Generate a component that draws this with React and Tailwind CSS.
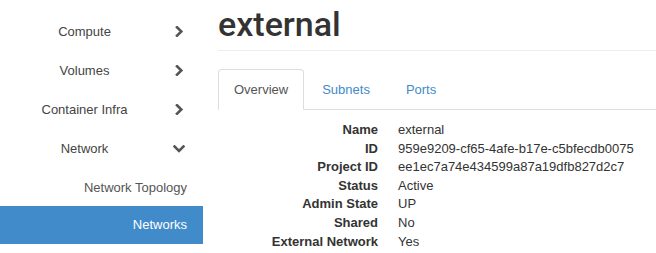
import React from 'react'

function Chevron({ down }) {
  return down ? (
    <svg width="12" height="8" viewBox="0 0 12 8" fill="none">
      <path d="M1.5 1.5L6 6L10.5 1.5" stroke="#555" strokeWidth="2.6" strokeLinecap="square" />
    </svg>
  ) : (
    <svg width="9" height="11" viewBox="0 0 9 11" fill="none">
      <path d="M2 1.3L6.3 5.5L2 9.7" stroke="#555" strokeWidth="2.6" strokeLinecap="square" />
    </svg>
  )
}

const navItems = [
  { label: 'Compute' },
  { label: 'Volumes' },
  { label: 'Container Infra' },
  { label: 'Network', open: true },
]

const details = [
  ['Name', 'external'],
  ['ID', '959e9209-cf65-4afe-b17e-c5bfecdb0075'],
  ['Project ID', 'ee1ec7a74e434599a87a19dfb827d2c7'],
  ['Status', 'Active'],
  ['Admin State', 'UP'],
  ['Shared', 'No'],
  ['External Network', 'Yes'],
]

export default function App() {
  return (
    <div className="flex w-[656px] h-[253px] overflow-hidden bg-white text-[13px] font-['Liberation_Sans',Arial,sans-serif]">
      <aside className="w-[203px] shrink-0 pt-[12px] text-[#444]">
        {navItems.map((item) => (
          <div key={item.label} className="flex items-center h-[39px]">
            <span className="w-[169px] text-center">{item.label}</span>
            <span className="flex justify-center w-[20px]">
              <Chevron down={item.open} />
            </span>
          </div>
        ))}
        <div className="flex items-center justify-end h-[38px] pr-[16px] pt-[2px] text-[#555]">Network Topology</div>
        <div className="flex items-center justify-end h-[38px] pr-[16px] bg-[#428bca] text-white">Networks</div>
      </aside>

      <main className="flex-1 pl-[15px] pt-[5px]">
        <h1 className="text-[34px] leading-[39px] font-medium font-['Roboto',sans-serif] text-[#333] pb-[6px] border-b border-[#eee]">external</h1>

        <div className="flex mt-[18px] border-b border-[#ddd] h-[41px]">
          <div className="px-[15px] h-[41px] flex items-center border border-[#ddd] border-b-white rounded-t-[4px] text-[#555] bg-white mr-[2px]">Overview</div>
          <div className="pl-[16px] pr-[18px] h-[41px] flex items-center text-[#428bca] mr-[2px]">Subnets</div>
          <div className="px-[16px] h-[41px] flex items-center text-[#428bca]">Ports</div>
        </div>

        <dl className="mt-[11px] grid grid-cols-[160px_1fr] gap-x-[20px] leading-[18.6px] text-[#333]">
          {details.map(([k, v]) => (
            <React.Fragment key={k}>
              <dt className="text-right font-bold">{k}</dt>
              <dd>{v}</dd>
            </React.Fragment>
          ))}
        </dl>
      </main>
    </div>
  )
}
